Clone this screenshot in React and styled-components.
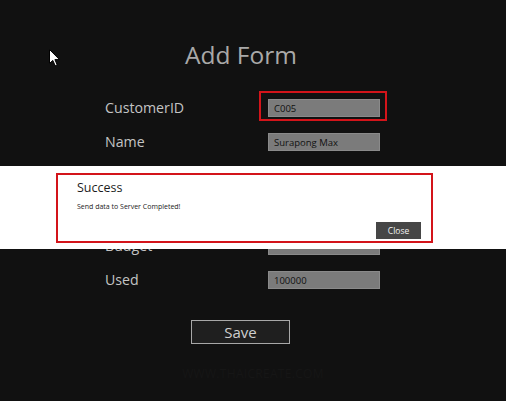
import React from "react"
import styled, { createGlobalStyle, css } from "styled-components"

const GlobalStyle = createGlobalStyle`
  html, body {
    margin: 0;
    padding: 0;
    background: #111111;
  }
  body {
    font-family: "Open Sans", "Noto Sans", sans-serif;
  }
`

const Page = styled.div`
  position: relative;
  width: 506px;
  height: 401px;
  overflow: hidden;
  background: #111111;
  display: flex;
  flex-direction: column;
`

const Title = styled.h1`
  margin: 40px 0 0;
  width: 482px;
  text-align: center;
  font-weight: 400;
  font-size: 24.5px;
  line-height: 30px;
  color: #a9a9a9;
`

const Form = styled.div`
  margin: 29px 0 0 105px;
  display: grid;
  grid-template-columns: 163px auto;
  grid-auto-rows: 18px;
  row-gap: 16.4px;
  align-items: center;
`

const Label = styled.div`
  font-size: 14.2px;
  line-height: 18px;
  color: #c4c4c4;
`

const Field = styled.div`
  position: relative;
  justify-self: start;

  ${(p) =>
    p.$highlighted &&
    css`
      &::after {
        content: "";
        position: absolute;
        left: -9px;
        right: -7px;
        top: -8px;
        bottom: -4px;
        border: 2px solid #d3141a;
      }
    `}
`

const Input = styled.div`
  box-sizing: border-box;
  width: ${(p) => p.$width || 112}px;
  height: 18px;
  padding: 0 5px;
  background: #7b7b7b;
  border: 1px solid #8a8a8a;
  font-size: 9.5px;
  line-height: 18px;
  color: #111;
`

const SaveButton = styled.button`
  align-self: flex-start;
  margin: 31px 0 0 191px;
  width: 99px;
  height: 24px;
  padding: 0;
  box-sizing: border-box;
  background: #1f1f1f;
  border: 1px solid #a8a8a8;
  color: #cfcfcf;
  font-family: "Open Sans", "Noto Sans", sans-serif;
  font-size: 15px;
  line-height: 20px;
`

const Watermark = styled.div`
  margin-top: 21px;
  text-align: center;
  font-size: 12px;
  color: #161616;
  letter-spacing: 0.3px;
`

const Band = styled.div`
  position: absolute;
  left: 0;
  right: 0;
  top: 166px;
  height: 83px;
  background: #ffffff;
`

const Dialog = styled.div`
  position: absolute;
  top: 7px;
  left: 56px;
  width: 377px;
  height: 70px;
  box-sizing: border-box;
  border: 2px solid #d3141a;
  padding: 4px 10px 0 19px;
  display: flex;
  flex-direction: column;
`

const DialogTitle = styled.div`
  font-size: 12.5px;
  line-height: 18px;
  color: #1c1c1c;
`

const DialogText = styled.div`
  margin-top: 5px;
  font-size: 7px;
  line-height: 10px;
  color: #222;
`

const CloseButton = styled.button`
  align-self: flex-end;
  margin-top: 10px;
  width: 45px;
  height: 17px;
  padding: 0;
  border: none;
  background: #464646;
  color: #f2f2f2;
  font-family: "Open Sans", "Noto Sans", sans-serif;
  font-size: 8.5px;
`

const Cursor = styled.svg`
  position: absolute;
  left: 49px;
  top: 49px;
`

const fields = [
  { label: "CustomerID", value: "C005", highlighted: true },
  { label: "Name", value: "Surapong Max" },
  { label: "", value: "", width: 162 },
  { label: "", value: "" },
  { label: "Budget", value: "" },
  { label: "Used", value: "100000" },
]

export default function App() {
  return (
    <Page>
      <GlobalStyle />
      <Title>Add Form</Title>
      <Form>
        {fields.map((f, i) => (
          <React.Fragment key={i}>
            <Label>{f.label}</Label>
            <Field $highlighted={f.highlighted}>
              <Input $width={f.width}>{f.value}</Input>
            </Field>
          </React.Fragment>
        ))}
      </Form>
      <SaveButton>Save</SaveButton>
      <Watermark>WWW.THAICREATE.COM</Watermark>

      <Band>
        <Dialog>
          <DialogTitle>Success</DialogTitle>
          <DialogText>Send data to Server Completed!</DialogText>
          <CloseButton>Close</CloseButton>
        </Dialog>
      </Band>

      <Cursor width="12" height="18" viewBox="0 0 12 18">
        <path
          d="M0.5 0.5 L0.5 14.5 L3.8 11.4 L6.2 16.8 L8.2 15.9 L5.9 10.6 L10.5 10.6 Z"
          fill="#ffffff"
          stroke="#000000"
          strokeWidth="1"
        />
      </Cursor>
    </Page>
  )
}
